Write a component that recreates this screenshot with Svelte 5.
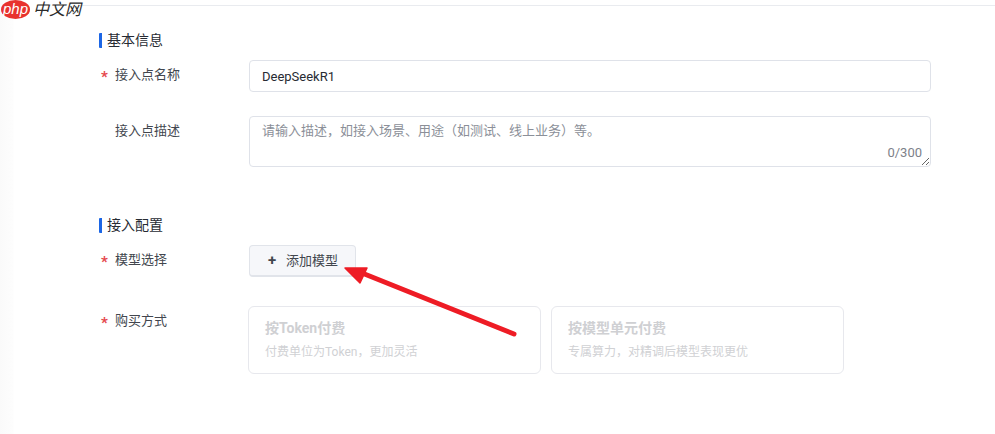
<script>
  const comma = '\uFF0C';
  const placeholder = `请输入描述${comma}如接入场景、用途\uFF08如测试、线上业务\uFF09等。`;
  const plans = [
    { title: '按Token付费', desc: `付费单位为Token${comma}更加灵活` },
    { title: '按模型单元付费', desc: `专属算力${comma}对精调后模型表现更优` }
  ];
</script>

<div class="page">
  <div class="logo">
    <span class="php">php</span>
    <span class="brand">中文网</span>
  </div>

  <form class="form">
    <h3>基本信息</h3>
    <div class="field name-field">
      <label class="required" for="name">接入点名称</label>
      <input id="name" type="text" value="DeepSeekR1" />
    </div>
    <div class="field desc-field">
      <label for="desc">接入点描述</label>
      <div class="textarea-wrap">
        <textarea id="desc" {placeholder}></textarea>
        <span class="count">0/300</span>
      </div>
    </div>

    <h3 class="second">接入配置</h3>
    <div class="field model-field">
      <label class="required" for="add">模型选择</label>
      <button id="add" type="button" class="add-button"><span class="plus">+</span>添加模型</button>
    </div>
    <div class="field buy-field">
      <span class="label required">购买方式</span>
      <div class="plans">
        {#each plans as plan}
          <div class="plan">
            <strong>{plan.title}</strong>
            <span>{plan.desc}</span>
          </div>
        {/each}
      </div>
    </div>
  </form>

  <svg class="arrow" width="995" height="434" viewBox="0 0 995 434">
    <path d="M514 334 L362 273" stroke="#ee1c25" stroke-width="5" stroke-linecap="round" fill="none" />
    <path d="M345 268 L367 268 L360 283 Z" fill="#ee1c25" stroke="#ee1c25" stroke-width="1.5" stroke-linejoin="round" />
  </svg>
</div>

<style>
  :global(body) {
    margin: 0;
    background: #fff;
  }
  .page {
    position: relative;
    width: 995px;
    height: 434px;
    overflow: hidden;
    box-sizing: border-box;
    font-family: Roboto, "Noto Sans CJK SC", sans-serif;
    background: linear-gradient(to right, #fafafa 0, #fdfdfd 13px, #fff 14px);
  }
  .page::before {
    content: '';
    position: absolute;
    top: 5px;
    left: 80px;
    right: 0;
    height: 1px;
    background: #e9ebef;
  }
  .logo {
    position: absolute;
    top: 0;
    left: 1px;
    display: flex;
    align-items: center;
    gap: 3px;
    height: 19px;
  }
  .php {
    width: 29px;
    height: 19px;
    border-radius: 50%;
    background: #e8322e;
    color: #fff;
    font: italic 15px/17px "Liberation Sans", sans-serif;
    text-align: center;
  }
  .brand {
    font-size: 16px;
    font-style: italic;
    font-weight: 400;
    line-height: 19px;
    color: #2b2b2b;
  }
  .form {
    padding: 33px 0 0 99px;
    width: 832px;
  }
  h3 {
    margin: 0;
    height: 15px;
    padding-left: 5px;
    border-left: 3px solid #1c66e5;
    border-radius: 1px;
    font-size: 14px;
    font-weight: 400;
    line-height: 15px;
    color: #272b33;
  }
  .second {
    margin-top: 51px;
  }
  .field {
    display: flex;
  }
  label, .label {
    position: relative;
    width: 150px;
    flex: none;
    padding-left: 16px;
    box-sizing: border-box;
    font-size: 13px;
    line-height: 30px;
    color: #42464e;
  }
  .required::before {
    content: '*';
    position: absolute;
    left: 2px;
    top: 10px;
    color: #e5484d;
    font-size: 15px;
    font-weight: 700;
    line-height: 14px;
  }
  .name-field {
    margin-top: 12px;
  }
  input {
    width: 682px;
    height: 32px;
    box-sizing: border-box;
    padding: 0 12px;
    border: 1px solid #dfe2e9;
    border-radius: 4px;
    outline: none;
    font-family: inherit;
    font-size: 13px;
    color: #272b33;
  }
  .desc-field {
    margin-top: 24px;
  }
  .textarea-wrap {
    position: relative;
    width: 682px;
    height: 51px;
  }
  textarea {
    display: block;
    width: 100%;
    height: 100%;
    box-sizing: border-box;
    padding: 5px 12px;
    border: 1px solid #dfe2e9;
    border-radius: 4px;
    outline: none;
    font-family: inherit;
    font-size: 13px;
    line-height: 18px;
    color: #272b33;
  }
  textarea::placeholder {
    color: #8b8f98;
    opacity: 1;
  }
  .count {
    position: absolute;
    right: 9px;
    bottom: 7px;
    font-size: 13px;
    line-height: 14px;
    color: #7d818a;
  }
  .model-field {
    margin-top: 12px;
  }
  .add-button {
    display: flex;
    align-items: center;
    justify-content: center;
    width: 107px;
    height: 32px;
    padding: 0 0 2px 1px;
    border: 1px solid #e1e4ea;
    border-bottom-width: 2px;
    border-radius: 4px;
    background: #f6f7fa;
    font-family: inherit;
    font-size: 13px;
    color: #42464e;
  }
  .plus {
    margin-right: 10px;
    font-size: 15px;
    font-weight: 700;
    line-height: 18px;
  }
  .buy-field {
    margin-top: 29px;
  }
  .buy-field .label {
    width: 149px;
  }
  .plans {
    display: flex;
    gap: 10px;
  }
  .plan {
    display: flex;
    flex-direction: column;
    width: 293px;
    height: 68px;
    box-sizing: border-box;
    padding: 12px 16px;
    border: 1px solid #e7e8ed;
    border-radius: 6px;
    color: #d0d1d4;
  }
  .plan strong {
    font-size: 14px;
    line-height: 18px;
    color: #cfd0d3;
  }
  .plan span {
    margin-top: 7px;
    font-size: 12px;
    line-height: 16px;
  }
  .arrow {
    position: absolute;
    inset: 0;
    pointer-events: none;
  }
</style>
